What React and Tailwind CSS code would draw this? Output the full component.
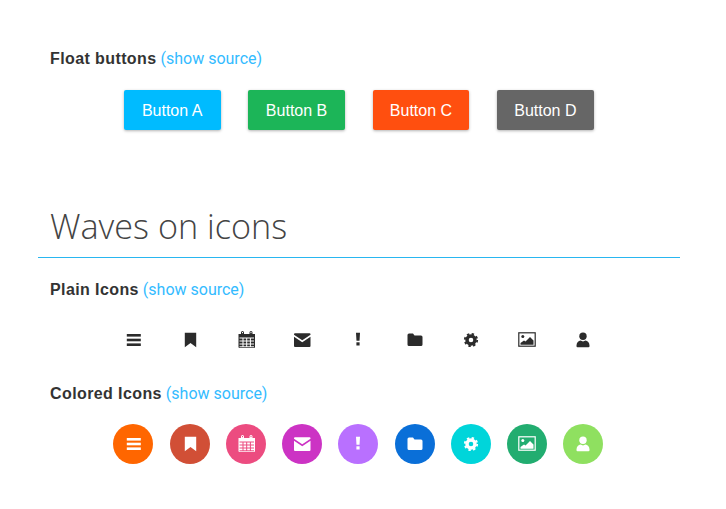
const buttons = [
  { label: "Button A", color: "bg-[#00bbff]" },
  { label: "Button B", color: "bg-[#1cb558]" },
  { label: "Button C", color: "bg-[#ff4f0f]" },
  { label: "Button D", color: "bg-[#666666]" },
];

function Bars() {
  return (
    <>
      <rect x="3.800" y="4" width="14" height="2.600" />
      <rect x="3.800" y="8.700" width="14" height="2.600" />
      <rect x="3.800" y="13.400" width="14" height="2.600" />
    </>
  );
}

function Bookmark() {
  return <path d="M4.800 2.800h11.400v14.400l-5.700-4.200-5.700 4.200z" />;
}

function Calendar() {
  return (
    <>
      <path d="M2.500 4h16.500v13a1 1 0 0 1-1 1H3.500a1 1 0 0 1-1-1z" />
      <path
        d="M6.500 4.500V2.500M15 4.500V2.500"
        stroke="currentColor"
        strokeWidth="3"
        strokeLinecap="round"
        fill="none"
      />
      <path
        d="M3.500 8h14.500M3.500 11h14.500M3.500 14h14.500M3.500 16.800h14.500M7 8v9M10.700 8v9M14.400 8v9"
        stroke="var(--icon-gap)"
        strokeWidth="1"
        fill="none"
      />
      <path d="M6.500 3.200V2M15 3.200V2" stroke="var(--icon-gap)" strokeWidth="1" fill="none" />
    </>
  );
}

function Envelope() {
  return (
    <>
      <path d="M2 4.200a1 1 0 0 1 1-1h14.500a1 1 0 0 1 1 1v.6l-8.250 5.400L2 4.800z" />
      <path d="M2 6.800l8.250 5.400 8.250-5.400v9.200a1 1 0 0 1-1 1H3a1 1 0 0 1-1-1z" />
    </>
  );
}

function Bang() {
  return (
    <>
      <path d="M8 2.800h4l-.5 8H8.500z" />
      <rect x="8.400" y="12.300" width="3.200" height="3.200" />
    </>
  );
}

function Folder() {
  return <path d="M2.500 5a1.500 1.500 0 0 1 1.500-1.500h4l1.500 2H16a1.500 1.500 0 0 1 1.500 1.500v7.500A1.500 1.500 0 0 1 16 16H4a1.500 1.500 0 0 1-1.500-1.500z" />;
}

function Gear() {
  return (
    <>
      <circle cx="10" cy="10" r="4" fill="none" stroke="currentColor" strokeWidth="3.400" />
      <circle
        cx="10"
        cy="10"
        r="6.200"
        fill="none"
        stroke="currentColor"
        strokeWidth="1.800"
        strokeDasharray="2.430 2.430"
      />
    </>
  );
}

function Picture() {
  return (
    <>
      <rect x="1.800" y="2.800" width="16.400" height="13.400" fill="none" stroke="currentColor" strokeWidth="1.200" />
      <circle cx="5.800" cy="6.500" r="1.500" />
      <path d="M3.500 14.800v-1.800l3.500-2.500 1.500 1 4.500-4.500 3.500 3.500v4.300z" />
    </>
  );
}

function User() {
  return (
    <>
      <circle cx="10" cy="6.300" r="3.700" />
      <path d="M3.500 15.500c0-3 2-4.800 4-5l2.500 1 2.500-1c2 .2 4 2 4 5v.8a1 1 0 0 1-1 1h-11a1 1 0 0 1-1-1z" />
    </>
  );
}

const icons = [
  { Glyph: Bars, color: "bg-[#ff6600]" },
  { Glyph: Bookmark, color: "bg-[#d14f36]" },
  { Glyph: Calendar, color: "bg-[#ec4c80]", gap: "#ec4c80" },
  { Glyph: Envelope, color: "bg-[#cc33c4]" },
  { Glyph: Bang, color: "bg-[#b970ff]" },
  { Glyph: Folder, color: "bg-[#0a6fd8]" },
  { Glyph: Gear, color: "bg-[#00d5da]" },
  { Glyph: Picture, color: "bg-[#22ad70]" },
  { Glyph: User, color: "bg-[#8fe060]" },
];

function IconSvg({ Glyph, gap }) {
  return (
    <svg
      width="20"
      height="20"
      viewBox="0 0 20 20"
      fill="currentColor"
      style={{ "--icon-gap": gap }}
    >
      <Glyph />
    </svg>
  );
}

function Title({ name }) {
  return (
    <h4 className="pl-3 text-base leading-[22px] text-[#333333]">
      <span className="font-['Liberation_Sans',sans-serif] font-bold tracking-[0.4px]">{name}</span>{" "}
      <a className="font-normal text-[#33bbff]">(show source)</a>
    </h4>
  );
}

export default function App() {
  return (
    <div className="h-[509px] w-[680px] bg-white pt-12 pl-[38px] font-['Roboto',sans-serif]">
      <Title name="Float buttons" />
      <div className="mt-5 flex justify-center gap-[27.6px] pr-[0.5px]">
        {buttons.map((b) => (
          <button
            key={b.label}
            className={`h-10 w-[96.8px] rounded-[2px] pt-px font-['Liberation_Sans',sans-serif] text-base text-white shadow-[0_1px_3px_rgba(0,0,0,0.3)] ${b.color}`}
          >
            {b.label}
          </button>
        ))}
      </div>

      <h1 className="mt-[71px] pb-[6px] pl-3 font-['Open_Sans',sans-serif] text-[34.2px] leading-[50px] font-light text-[#444444]">
        Waves on icons
      </h1>
      <div className="h-px bg-[#29b6f0]" />

      <div className="mt-[21px]">
        <Title name="Plain Icons" />
      </div>
      <div className="mt-[18.5px] flex justify-center gap-[16.25px] pr-[1.5px]">
        {icons.map((icon, i) => (
          <div key={i} className="flex h-10 w-10 items-center justify-center text-[#2b2b2b]">
            <IconSvg Glyph={icon.Glyph} gap="#ffffff" />
          </div>
        ))}
      </div>

      <div className="mt-[23.5px]">
        <Title name="Colored Icons" />
      </div>
      <div className="mt-[19px] flex justify-center gap-[16.25px] pr-[1.5px]">
        {icons.map((icon, i) => (
          <div
            key={i}
            className={`flex h-10 w-10 items-center justify-center rounded-full text-white ${icon.color}`}
          >
            <IconSvg Glyph={icon.Glyph} gap={icon.gap} />
          </div>
        ))}
      </div>
    </div>
  );
}
